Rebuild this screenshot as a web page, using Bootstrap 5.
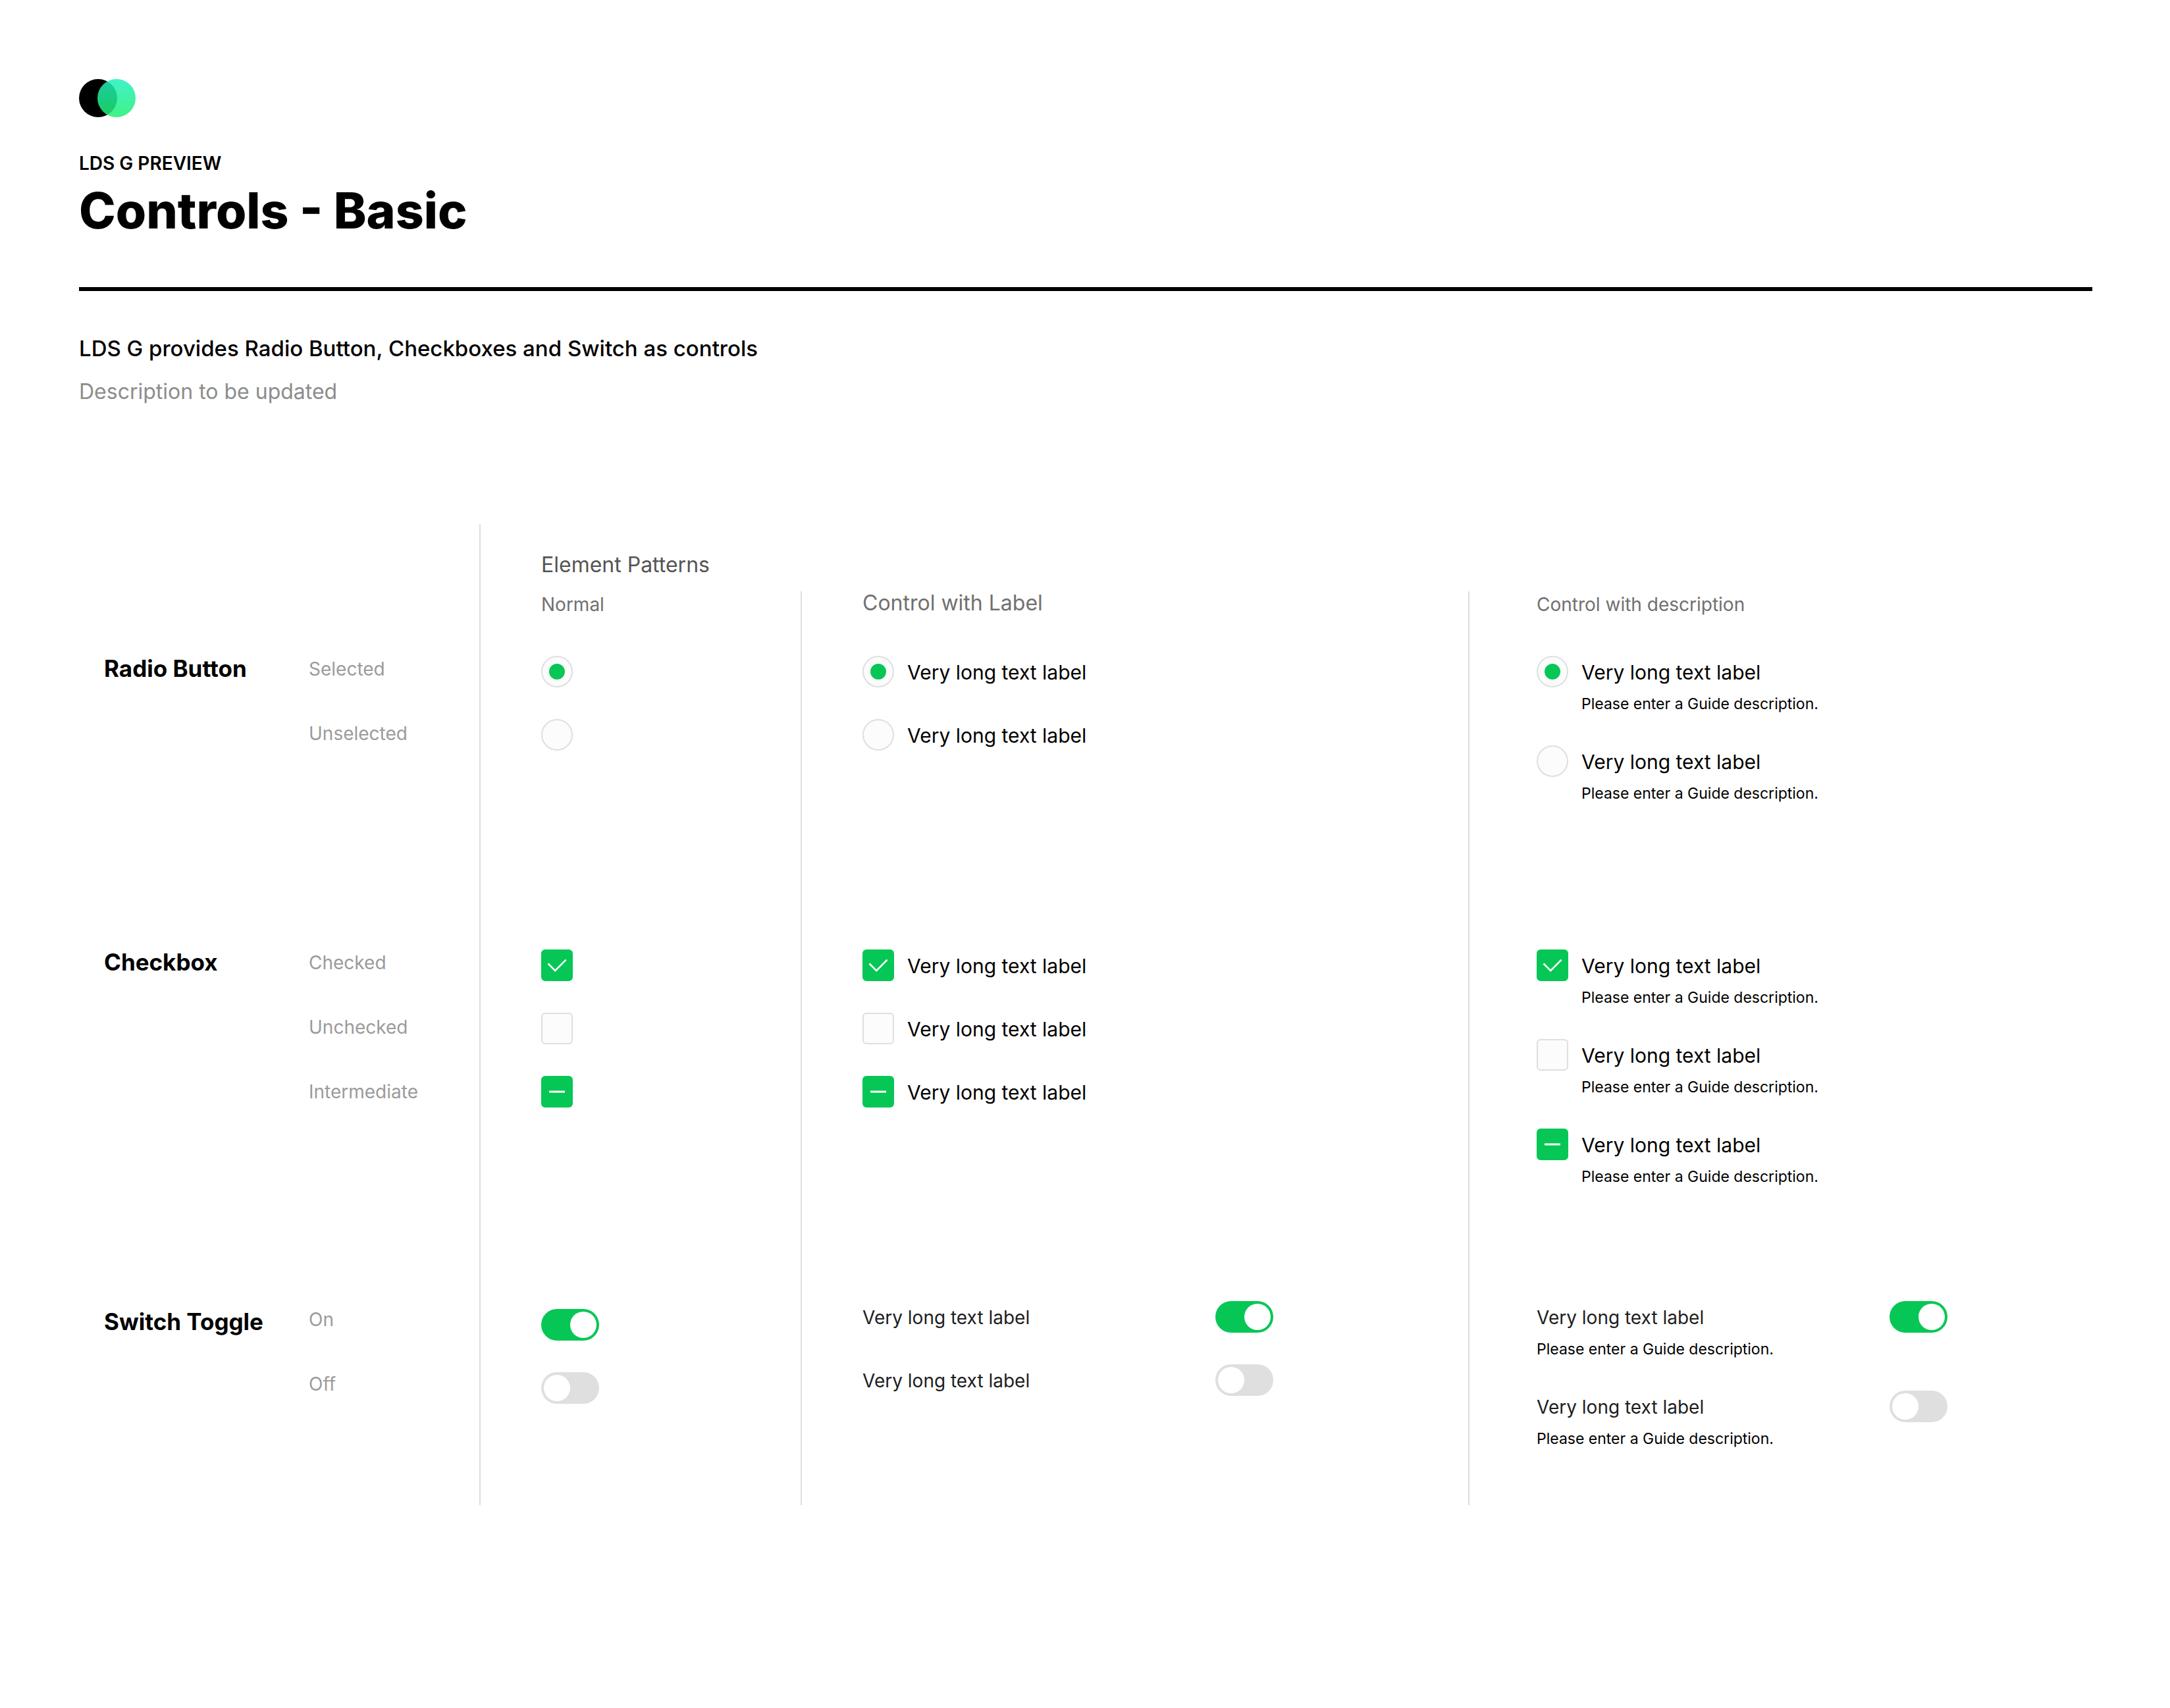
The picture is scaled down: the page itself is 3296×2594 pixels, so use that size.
<!DOCTYPE html>
<html lang="en">
<head>
<meta charset="utf-8">
<meta name="viewport" content="width=device-width, initial-scale=1">
<title>LDS G – Controls - Basic</title>
<link href="https://cdn.jsdelivr.net/npm/bootstrap@5.3.0/dist/css/bootstrap.min.css" rel="stylesheet">
<style>
  :root { --lds-green: #06c755; --lds-line: #dfdfdf; }
  body { font-family: Inter, "Noto Sans", sans-serif; color: #000; background: #fff; }
  .page { padding: 120px 118px 308px 120px; }

  .eyebrow { font-size: 28px; line-height: 36px; font-weight: 600; margin: 52px 0 10px; }
  .page-title { font-size: 75px; line-height: 88px; font-weight: 800; margin: 0; }
  .rule { height: 6px; background: #000; border: 0; opacity: 1; margin: 72px 0 65px; }
  .intro { font-size: 33px; line-height: 44px; margin: 0 0 22px; }
  .intro-muted { font-size: 32px; line-height: 44px; color: #8c8c8c; margin: 0 0 179px; }

  /* Specimen sheet: row names on the left, three pattern columns on the right */
  .sheet { display: grid; grid-template-columns: 608fr 2450fr; }
  .names { padding: 200px 0 0 38px; }
  .patterns { border-left: 2px solid var(--lds-line); }
  .patterns-title { font-size: 32px; line-height: 36px; font-weight: 400; color: #555; margin: 0; padding: 44px 92px 22px; }
  .pattern-cols { display: grid; grid-template-columns: 486fr 1014fr 948fr; }
  .pattern { padding-left: 92px; }
  .pattern + .pattern { border-left: 2px solid var(--lds-line); }
  .pattern-wide { padding-left: 102px; }
  .pattern-name { font-size: 28px; line-height: 40px; min-height: 98px; font-weight: 400; color: #707070; margin: 0; }
  .pattern-name-lg { font-size: 32px; line-height: 36px; }

  .sec-radio { min-height: 446px; }
  .sec-check { min-height: 534px; }
  .sec-switch { min-height: 310px; }
  .drop { padding-top: 12px; }

  .kind { width: 311px; font-size: 35px; line-height: 38px; font-weight: 700; margin: 0; }
  .states { list-style: none; margin: 0; padding: 0; display: grid; row-gap: 58px; align-content: start; font-size: 28px; line-height: 40px; color: #9b9b9b; }

  .stack { display: grid; align-content: start; }
  .stack-bare { row-gap: 48px; }
  .stack-label { row-gap: 46px; }
  .stack-desc { row-gap: 40px; }

  .item { display: flex; align-items: flex-start; gap: 20px; }
  .item-label { display: block; font-size: 30px; line-height: 50px; }
  .item-desc { display: block; font-size: 23px; line-height: 46px; }
  .item-switch { max-width: 624px; justify-content: space-between; }
  .item-switch .item-label { font-size: 28px; color: #1e1e1e; }

  .form-check-input.lds { flex: none; display: block; width: 48px; height: 48px; margin: 0; border: 2px solid var(--lds-line); background-color: #fcfcfc; background-position: center; background-origin: border-box; background-size: 48px 48px; }
  .form-check-input.lds[type=checkbox] { border-radius: 6px; }
  .form-check-input.lds[type=radio]:checked { background-color: #fcfcfc; border-color: var(--lds-line); background-image: url("data:image/svg+xml,%3csvg xmlns='http://www.w3.org/2000/svg' viewBox='0 0 48 48'%3e%3ccircle cx='24' cy='24' r='12' fill='%2306c755'/%3e%3c/svg%3e"); }
  .form-check-input.lds[type=checkbox]:checked, .form-check-input.lds[type=checkbox]:indeterminate { background-color: var(--lds-green); border-color: var(--lds-green); }
  .form-check-input.lds[type=checkbox]:checked { background-image: url("data:image/svg+xml,%3csvg xmlns='http://www.w3.org/2000/svg' viewBox='0 0 48 48'%3e%3cpath d='M10.5 21.5L21.2 32.2L37.6 15.6' fill='none' stroke='%23fff' stroke-width='2.6'/%3e%3c/svg%3e"); }
  .form-check-input.lds[type=checkbox]:indeterminate { background-image: url("data:image/svg+xml,%3csvg xmlns='http://www.w3.org/2000/svg' viewBox='0 0 48 48'%3e%3cpath d='M12 24H36' stroke='%23fff' stroke-width='3'/%3e%3c/svg%3e"); }
  .form-check-input.lds-switch[type=checkbox], .form-check-input.lds-switch[type=checkbox]:checked { width: 88px; border: 0; border-radius: 24px; background-size: 88px 48px; }
  .form-check-input.lds-switch[type=checkbox] { background-color: var(--lds-line); background-image: url("data:image/svg+xml,%3csvg xmlns='http://www.w3.org/2000/svg' viewBox='0 0 88 48'%3e%3ccircle cx='24' cy='24' r='20' fill='%23fff'/%3e%3c/svg%3e"); }
  .form-check-input.lds-switch[type=checkbox]:checked { background-image: url("data:image/svg+xml,%3csvg xmlns='http://www.w3.org/2000/svg' viewBox='0 0 88 48'%3e%3ccircle cx='64' cy='24' r='20' fill='%23fff'/%3e%3c/svg%3e"); }
</style>
</head>
<body>
<main class="page">
  <header>
    <svg class="d-block" width="86" height="58" viewBox="0 0 86 58" role="img" aria-label="LDS logo">
      <defs><linearGradient id="logoGrad" x1="0" y1="0" x2="0" y2="1"><stop offset="0" stop-color="#1ff0c0"/><stop offset="1" stop-color="#1ff070"/></linearGradient></defs>
      <circle cx="29" cy="29" r="29" fill="#000"/>
      <circle cx="57" cy="29" r="29" fill="url(#logoGrad)" fill-opacity=".85"/>
    </svg>
    <p class="eyebrow">LDS G PREVIEW</p>
    <h1 class="page-title">Controls - Basic</h1>
    <hr class="rule">
    <p class="intro fw-medium">LDS G provides Radio Button, Checkboxes and Switch as controls</p>
    <p class="intro-muted">Description to be updated</p>
  </header>

  <div class="sheet">
    <div class="names">
      <section class="sec-radio d-flex">
        <h2 class="kind">Radio Button</h2>
        <ul class="states"><li>Selected</li><li>Unselected</li></ul>
      </section>
      <section class="sec-check d-flex">
        <h2 class="kind">Checkbox</h2>
        <ul class="states"><li>Checked</li><li>Unchecked</li><li>Intermediate</li></ul>
      </section>
      <section class="sec-switch d-flex">
        <h2 class="kind drop">Switch Toggle</h2>
        <ul class="states pt-2"><li>On</li><li>Off</li></ul>
      </section>
    </div>

    <div class="patterns">
      <h2 class="patterns-title">Element Patterns</h2>
      <div class="pattern-cols">

        <div class="pattern">
          <h3 class="pattern-name">Normal</h3>
          <div class="sec-radio stack stack-bare">
            <input class="form-check-input lds" type="radio" name="r-normal" aria-label="Selected" checked>
            <input class="form-check-input lds" type="radio" name="r-normal" aria-label="Unselected">
          </div>
          <div class="sec-check stack stack-bare">
            <input class="form-check-input lds" type="checkbox" aria-label="Checked" checked>
            <input class="form-check-input lds" type="checkbox" aria-label="Unchecked">
            <input class="form-check-input lds" type="checkbox" aria-label="Intermediate" data-mixed>
          </div>
          <div class="sec-switch stack stack-bare drop">
            <input class="form-check-input lds lds-switch" type="checkbox" role="switch" aria-label="On" checked>
            <input class="form-check-input lds lds-switch" type="checkbox" role="switch" aria-label="Off">
          </div>
        </div>

        <div class="pattern">
          <h3 class="pattern-name pattern-name-lg">Control with Label</h3>
          <div class="sec-radio stack stack-label">
            <div class="item"><input class="form-check-input lds" type="radio" name="r-label" id="lr1" checked><label class="item-label" for="lr1">Very long text label</label></div>
            <div class="item"><input class="form-check-input lds" type="radio" name="r-label" id="lr2"><label class="item-label" for="lr2">Very long text label</label></div>
          </div>
          <div class="sec-check stack stack-label">
            <div class="item"><input class="form-check-input lds" type="checkbox" id="lc1" checked><label class="item-label" for="lc1">Very long text label</label></div>
            <div class="item"><input class="form-check-input lds" type="checkbox" id="lc2"><label class="item-label" for="lc2">Very long text label</label></div>
            <div class="item"><input class="form-check-input lds" type="checkbox" id="lc3" data-mixed><label class="item-label" for="lc3">Very long text label</label></div>
          </div>
          <div class="sec-switch stack stack-label">
            <div class="item item-switch"><label class="item-label" for="ls1">Very long text label</label><input class="form-check-input lds lds-switch" type="checkbox" role="switch" id="ls1" checked></div>
            <div class="item item-switch"><label class="item-label" for="ls2">Very long text label</label><input class="form-check-input lds lds-switch" type="checkbox" role="switch" id="ls2"></div>
          </div>
        </div>

        <div class="pattern pattern-wide">
          <h3 class="pattern-name">Control with description</h3>
          <div class="sec-radio stack stack-desc">
            <div class="item"><input class="form-check-input lds" type="radio" name="r-desc" id="dr1" aria-describedby="dr1d" checked><div><label class="item-label" for="dr1">Very long text label</label><span class="item-desc" id="dr1d">Please enter a Guide description.</span></div></div>
            <div class="item"><input class="form-check-input lds" type="radio" name="r-desc" id="dr2" aria-describedby="dr2d"><div><label class="item-label" for="dr2">Very long text label</label><span class="item-desc" id="dr2d">Please enter a Guide description.</span></div></div>
          </div>
          <div class="sec-check stack stack-desc">
            <div class="item"><input class="form-check-input lds" type="checkbox" id="dc1" aria-describedby="dc1d" checked><div><label class="item-label" for="dc1">Very long text label</label><span class="item-desc" id="dc1d">Please enter a Guide description.</span></div></div>
            <div class="item"><input class="form-check-input lds" type="checkbox" id="dc2" aria-describedby="dc2d"><div><label class="item-label" for="dc2">Very long text label</label><span class="item-desc" id="dc2d">Please enter a Guide description.</span></div></div>
            <div class="item"><input class="form-check-input lds" type="checkbox" id="dc3" aria-describedby="dc3d" data-mixed><div><label class="item-label" for="dc3">Very long text label</label><span class="item-desc" id="dc3d">Please enter a Guide description.</span></div></div>
          </div>
          <div class="sec-switch stack stack-desc">
            <div class="item item-switch"><div><label class="item-label" for="ds1">Very long text label</label><span class="item-desc" id="ds1d">Please enter a Guide description.</span></div><input class="form-check-input lds lds-switch" type="checkbox" role="switch" id="ds1" aria-describedby="ds1d" checked></div>
            <div class="item item-switch"><div><label class="item-label" for="ds2">Very long text label</label><span class="item-desc" id="ds2d">Please enter a Guide description.</span></div><input class="form-check-input lds lds-switch" type="checkbox" role="switch" id="ds2" aria-describedby="ds2d"></div>
          </div>
        </div>

      </div>
    </div>
  </div>
</main>
<script src="https://cdn.jsdelivr.net/npm/bootstrap@5.3.0/dist/js/bootstrap.bundle.min.js"></script>
<script>
  // The mixed state can only be set from script
  document.querySelectorAll('[data-mixed]').forEach(function (box) { box.indeterminate = true; });
</script>
</body>
</html>
